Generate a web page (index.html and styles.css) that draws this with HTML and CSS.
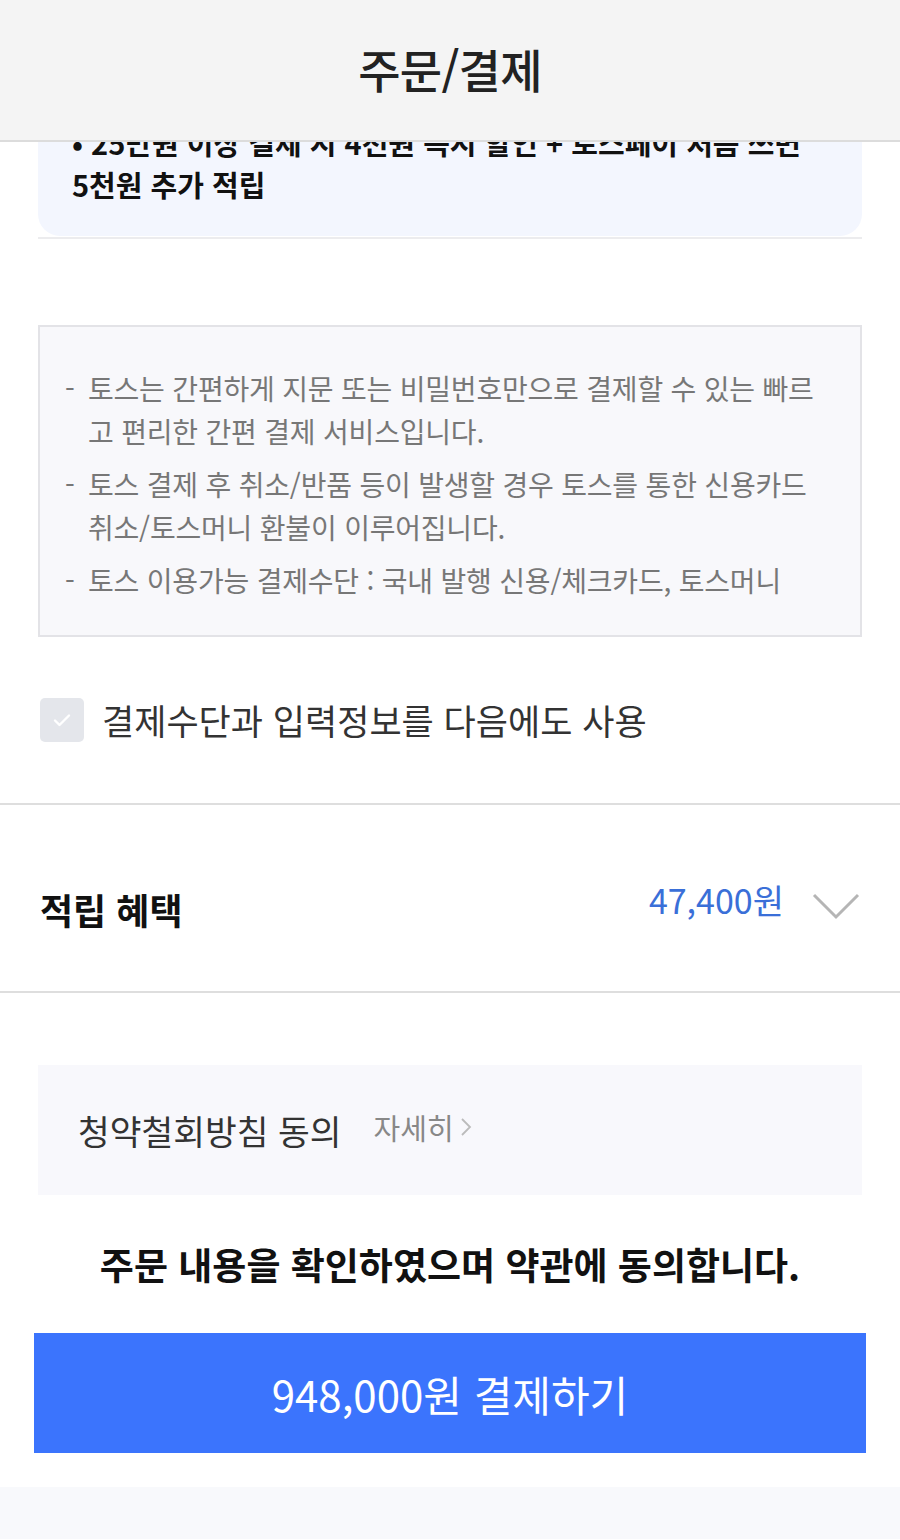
FILE: index.html
```html
<!DOCTYPE html>
<html lang="ko">
<head>
  <meta charset="UTF-8" />
  <title>주문/결제</title>
  <link rel="stylesheet" href="styles.css">
</head>
<body>
  <header class="top-bar">
    <h1>주문/결제</h1>
  </header>

  <div class="page">
    <section class="promo">
      <div class="promo-card">
        <p>• 25만원 이상 결제 시 4천원 즉시 할인 + 토스페이 처음 쓰면 5천원 추가 적립</p>
      </div>
    </section>

    <section class="pay-info">
      <div class="info-box">
        <p><span class="dash">-</span>토스는 간편하게 지문 또는 비밀번호만으로 결제할 수 있는 빠르고 편리한 간편 결제 서비스입니다.</p>
        <p><span class="dash">-</span>토스 결제 후 취소/반품 등이 발생할 경우 토스를 통한 신용카드 취소/토스머니 환불이 이루어집니다.</p>
        <p><span class="dash">-</span>토스 이용가능 결제수단 : 국내 발행 신용/체크카드, 토스머니</p>
      </div>

      <label class="save-check">
        <span class="box">
          <svg width="24" height="24" viewBox="0 0 24 24"><path d="M5 12.5l4.5 4.5L19 7.5" fill="none" stroke="#fff" stroke-width="2.4" stroke-linecap="round" stroke-linejoin="round"/></svg>
        </span>
        <span class="label-text">결제수단과 입력정보를 다음에도 사용</span>
      </label>
    </section>

    <section class="reward">
      <h2>적립 혜택</h2>
      <div class="reward-right">
        <span class="amount">47,400원</span>
        <svg class="chev" width="48" height="30" viewBox="0 0 48 30"><path d="M2 4l22 22L46 4" fill="none" stroke="#b5b5b5" stroke-width="3"/></svg>
      </div>
    </section>

    <section class="agree">
      <div class="policy">
        <span class="policy-title">청약철회방침 동의</span>
        <span class="more">자세히 <svg width="12" height="22" viewBox="0 0 12 22"><path d="M2 3l8 8-8 8" fill="none" stroke="#bbb" stroke-width="1.8"/></svg></span>
      </div>
      <p class="confirm">주문 내용을 확인하였으며 약관에 동의합니다.</p>
      <button class="pay-btn">948,000원 결제하기</button>
    </section>

    <div class="bottom-band"></div>
  </div>
</body>
</html>
```

FILE: styles.css
```css
* { box-sizing: border-box; margin: 0; padding: 0; }
body { font-family: "Noto Sans CJK KR", "Noto Sans", sans-serif; background: #fff; color: #222; width: 900px; position: relative; }

.top-bar {
  position: absolute;
  top: 0; left: 0;
  width: 900px;
  height: 142px;
  background: #f4f4f4;
  border-bottom: 2px solid #dcdcdc;
  display: flex;
  align-items: center;
  justify-content: center;
  z-index: 5;
}
.top-bar h1 { font-size: 46px; font-weight: 500; letter-spacing: -0.8px; color: #222; margin-top: -4px; }

.page { padding-top: 91px; }

.promo { margin: 0 38px; border-bottom: 2px solid #ececee; padding-bottom: 1px; }
.promo-card {
  background: #f3f6fe;
  border-radius: 0 0 22px 22px;
  padding: 30px 40px 31px 34px;
}
.promo-card p { font-size: 29px; font-weight: 700; line-height: 42px; letter-spacing: 0; color: #111; }

.pay-info { padding: 86px 38px 0; border-bottom: 2px solid #dedede; }
.info-box {
  background: #f8f8fb;
  border: 2px solid #e3e3e7;
  padding: 40px 28px 33px 25px;
}
.info-box p {
  display: flex;
  font-size: 28px;
  line-height: 43px;
  letter-spacing: -0.2px;
  color: #777;
  margin-bottom: 10px;
}
.info-box p:last-child { margin-bottom: 0; }
.info-box .dash { width: 23px; flex: none; }

.save-check { display: flex; align-items: center; gap: 18px; padding: 61px 2px 61px; }
.save-check .box {
  width: 44px; height: 44px;
  border-radius: 5px;
  background: #e4e6eb;
  display: flex; align-items: center; justify-content: center;
}
.save-check .label-text { font-size: 35px; line-height: 44px; color: #333; }

.reward {
  display: flex;
  align-items: center;
  justify-content: space-between;
  height: 188px;
  padding: 0 40px;
  border-bottom: 2px solid #dedede;
}
.reward h2 { font-size: 36px; font-weight: 700; color: #111; margin-top: 22px; }
.reward-right { display: flex; align-items: center; gap: 28px; margin-top: 2px; }
.amount { font-size: 34px; color: #3a6fd8; }
.chev { margin-top: 14px; }

.agree { padding: 72px 34px 34px; }
.policy {
  margin: 0 4px;
  height: 130px;
  background: #f8f8fc;
  display: flex;
  align-items: center;
  padding-left: 40px;
  gap: 32px;
}
.policy-title { font-size: 34.5px; color: #333; }
.more { font-size: 29px; color: #888; display: flex; align-items: center; gap: 6px; margin-top: -6px; }

.confirm { text-align: center; font-size: 37px; line-height: 54px; font-weight: 700; color: #111; margin-top: 42px; }
.pay-btn {
  display: block;
  width: 832px;
  height: 120px;
  margin-top: 42px;
  border: none;
  background: #3b74fd;
  color: #fff;
  font-family: "Noto Sans CJK KR", sans-serif;
  font-size: 42px;
}

.bottom-band { height: 52px; background: #f8f9fc; }
```
